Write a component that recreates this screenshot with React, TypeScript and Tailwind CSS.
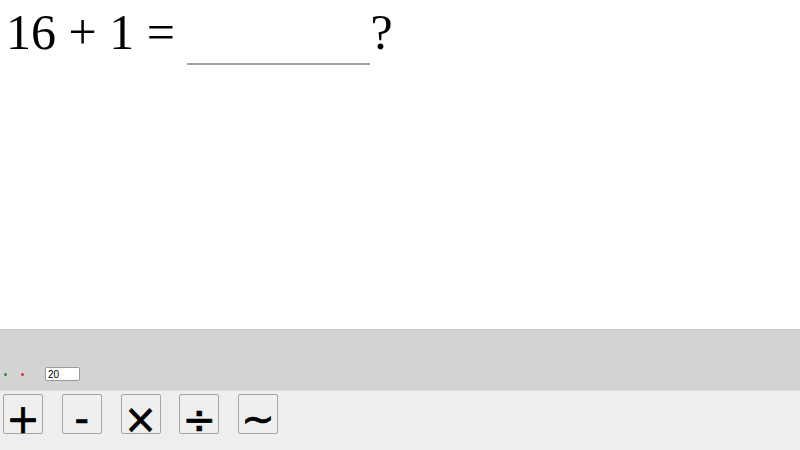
import React from 'react'

const ops = ['+', '-', '×', '÷', '~']

export default function App() {
  return (
    <div className="w-[800px] h-[450px] flex flex-col bg-white overflow-hidden">
      {/* question */}
      <div className="h-[329px] bg-white">
        <div
          className="flex items-end pt-[7px] pl-[6px] text-[50px] leading-none text-black"
          style={{ fontFamily: '"Liberation Serif", serif' }}
        >
          <span className="whitespace-pre">16 + 1 = </span>
          <span className="w-[183px] h-[52px] border-b-2 border-[#a0a0a0] mb-[-8px]" />
          <span>?</span>
        </div>
      </div>

      {/* settings band */}
      <div
        className="h-[61px] bg-[#d3d3d3] border-t border-[#cccccc] flex items-end pb-[9px]"
        style={{ fontFamily: '"Liberation Sans", Arial, sans-serif' }}
      >
        <div className="flex items-center">
          <span className="ml-[4px] w-[3px] h-[3px] rounded-full bg-[#2f8a3a]" />
          <span className="ml-[14px] w-[3px] h-[3px] rounded-full bg-[#e0304e]" />
          <input
            readOnly
            value="20"
            className="ml-[21px] w-[35px] h-[14px] bg-white border border-[#9a9a9a] rounded-[2px] px-[2px] text-[10px] leading-none text-black outline-none"
          />
        </div>
      </div>

      {/* operator buttons */}
      <div
        className="h-[60px] bg-[#eeeeee] border-t border-[#dcdcdc] flex gap-[18.75px] pl-[3px] pt-[3px]"
        style={{ fontFamily: '"DejaVu Sans", sans-serif' }}
      >
        {ops.map((op) => (
          <button
            key={op}
            className="w-10 h-10 bg-[#efefef] border border-[#a5a5a5] rounded-[2px] flex items-start justify-center pt-0 text-[40px] font-normal leading-none text-black overflow-visible [-webkit-text-stroke:0.7px_black]"
          >
            <span className="block leading-none mt-[4px]">{op}</span>
          </button>
        ))}
      </div>
    </div>
  )
}
